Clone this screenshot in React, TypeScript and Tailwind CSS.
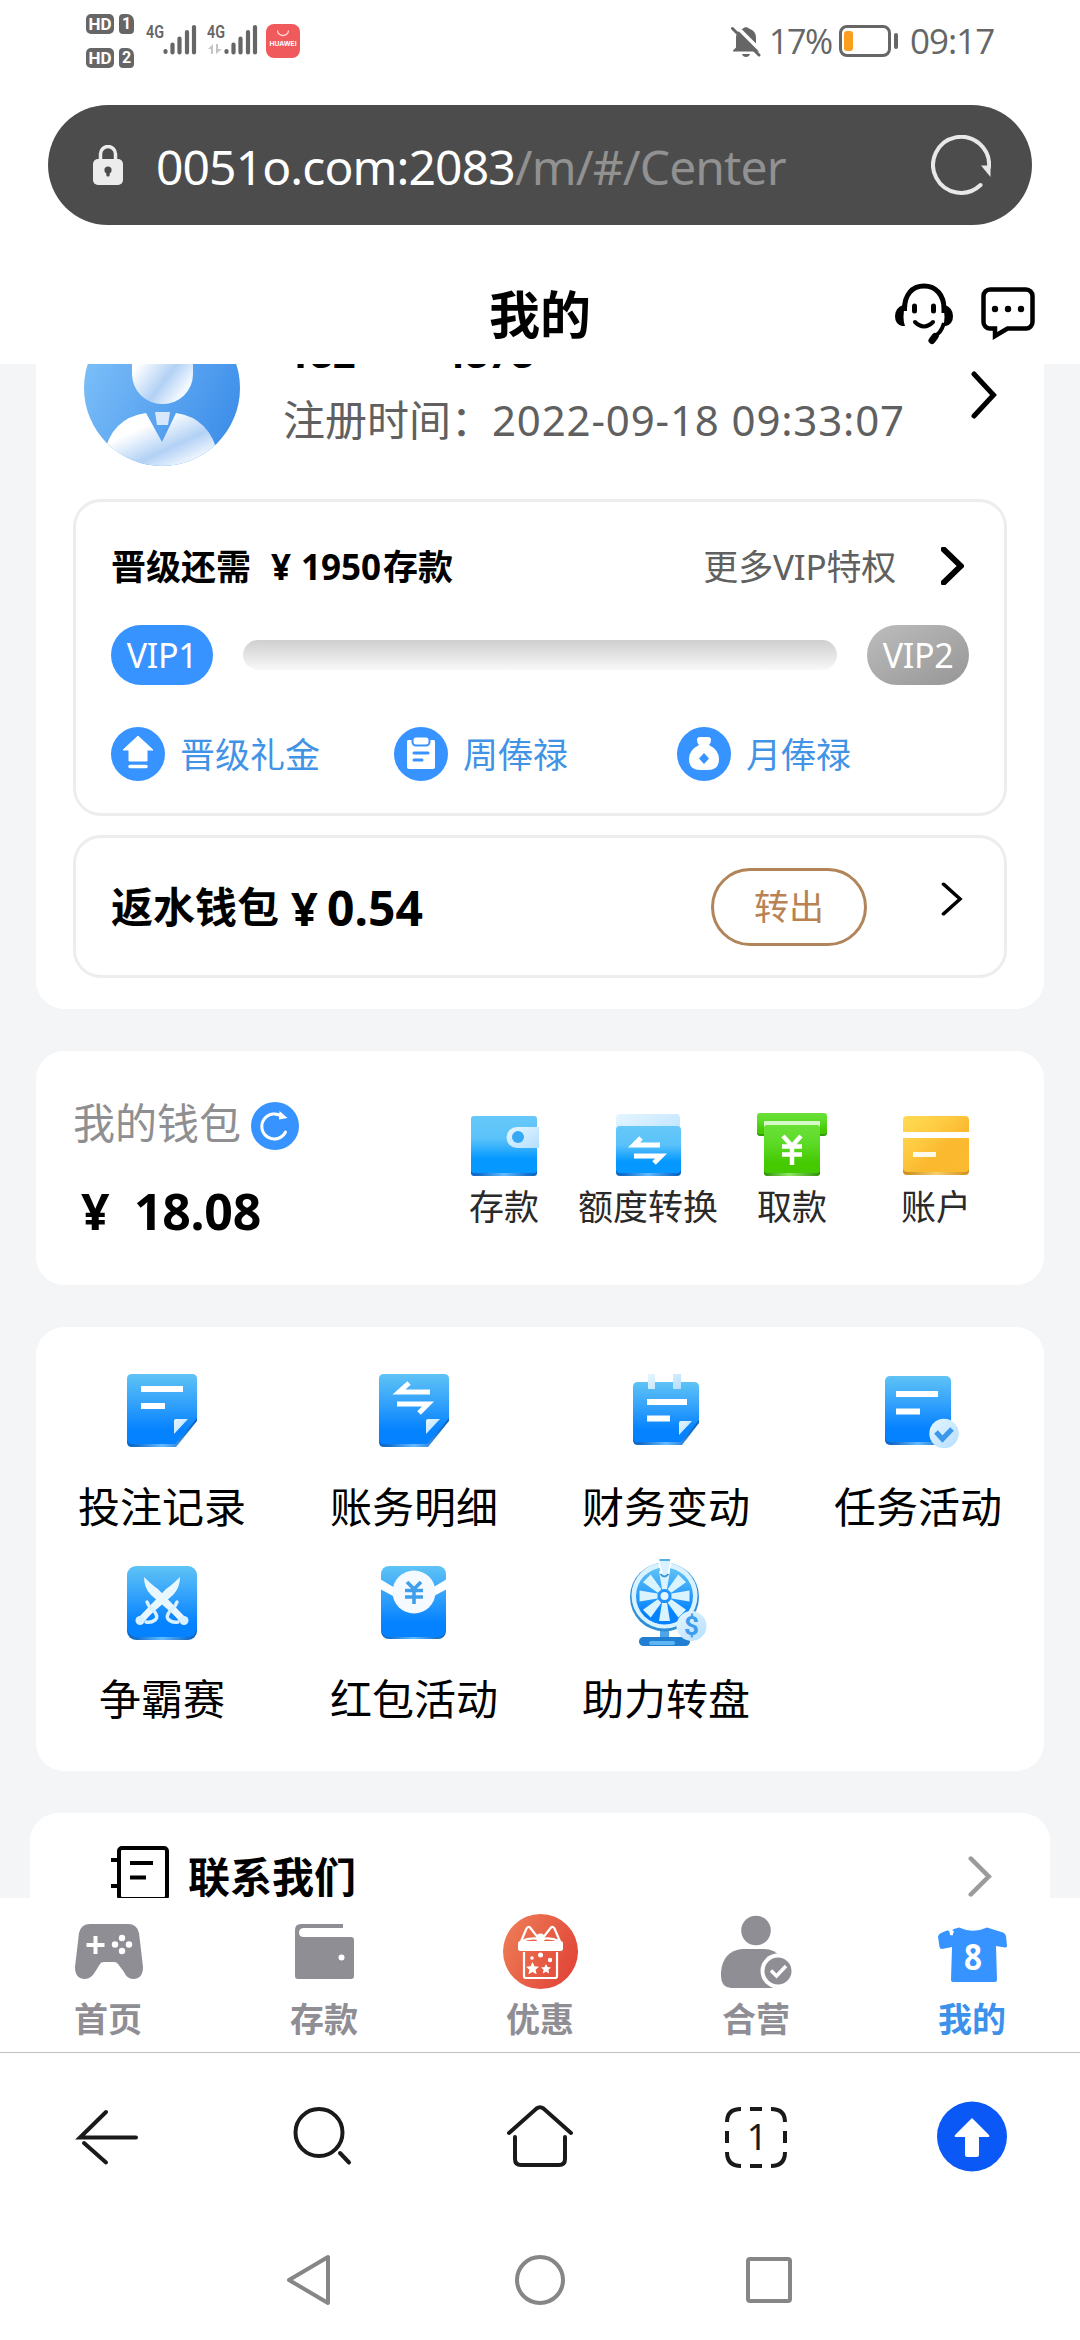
import React from "react";

type IconProps = { className?: string };

const FONT = "font-['Noto_Sans','Noto_Sans_CJK_SC',sans-serif]";

function Defs() {
  return (
    <svg className="absolute h-0 w-0" aria-hidden="true">
      <defs>
        <linearGradient id="blue" x1="0" y1="0" x2="0" y2="1">
          <stop offset="0" stopColor="#5fc3f5" />
          <stop offset="0.45" stopColor="#2f9ffc" />
          <stop offset="0.8" stopColor="#0582ff" />
          <stop offset="1" stopColor="#0582ff" />
        </linearGradient>
        <linearGradient id="sky" x1="0" y1="0" x2="0" y2="1">
          <stop offset="0" stopColor="#67c8f9" />
          <stop offset="0.4" stopColor="#5ac2fa" />
          <stop offset="0.75" stopColor="#0599ff" />
          <stop offset="1" stopColor="#0599ff" />
        </linearGradient>
        <linearGradient id="green" x1="0" y1="0" x2="0" y2="1">
          <stop offset="0" stopColor="#6ae038" />
          <stop offset="0.35" stopColor="#5edb28" />
          <stop offset="0.8" stopColor="#45c901" />
          <stop offset="1" stopColor="#45c901" />
        </linearGradient>
        <linearGradient id="gold" x1="0" y1="0" x2="1" y2="1">
          <stop offset="0" stopColor="#ffdb52" />
          <stop offset="0.35" stopColor="#fecb42" />
          <stop offset="0.6" stopColor="#fbb930" />
          <stop offset="1" stopColor="#fcba30" />
        </linearGradient>
        <linearGradient id="ice" x1="0" y1="0" x2="1" y2="1">
          <stop offset="0" stopColor="#e6f6ff" />
          <stop offset="1" stopColor="#b4dfff" />
        </linearGradient>
        <linearGradient id="edge" x1="0" y1="0" x2="1" y2="0">
          <stop offset="0" stopColor="#0a62c0" />
          <stop offset="0.15" stopColor="#1873cf" />
          <stop offset="0.5" stopColor="#65bbff" />
          <stop offset="0.85" stopColor="#1873cf" />
          <stop offset="1" stopColor="#0a62c0" />
        </linearGradient>
        <linearGradient id="edgeGreen" x1="0" y1="0" x2="1" y2="0">
          <stop offset="0" stopColor="#2f9005" />
          <stop offset="0.45" stopColor="#8ee765" />
          <stop offset="1" stopColor="#2f9005" />
        </linearGradient>
        <linearGradient id="edgeGold" x1="0" y1="0" x2="1" y2="0">
          <stop offset="0" stopColor="#c58a14" />
          <stop offset="0.5" stopColor="#f5cf6c" />
          <stop offset="1" stopColor="#cf9018" />
        </linearGradient>
        <linearGradient id="avatarBg" x1="0" y1="0.2" x2="1" y2="0.7">
          <stop offset="0" stopColor="#7fc1f9" />
          <stop offset="1" stopColor="#3d8eea" />
        </linearGradient>
        <linearGradient id="avatarSkin" x1="0" y1="0" x2="1" y2="1">
          <stop offset="0.3" stopColor="#ffffff" />
          <stop offset="0.62" stopColor="#b2d1f5" />
          <stop offset="0.85" stopColor="#f4f9ff" />
        </linearGradient>
        <linearGradient id="gift" x1="0" y1="0" x2="1" y2="0.5">
          <stop offset="0" stopColor="#ee8058" />
          <stop offset="1" stopColor="#e3493a" />
        </linearGradient>
      </defs>
    </svg>
  );
}

/* ---------- status bar ---------- */

function HdBadge({ sim }: { sim: string }) {
  return (
    <div className="flex h-[20px] gap-[5px]">
      <span className="h-[20px] w-[28px] rounded-[5px] bg-[#666] text-center text-[17px] leading-[20px] font-bold text-white font-['Roboto',sans-serif]">
        HD
      </span>
      <span className="h-[20px] w-[15px] rounded-[4px] rounded-tr-[7px] bg-[#666] text-center text-[16px] leading-[20px] font-bold text-white font-['Roboto',sans-serif]">
        {sim}
      </span>
    </div>
  );
}

function Signal({ data }: { data?: boolean }) {
  return (
    <svg className="h-[34px] w-[52px] shrink-0 overflow-visible" viewBox="0 0 52 34">
      <text x="0" y="15" fontSize="18" fontWeight="600" fill="#666" fontFamily="Roboto, sans-serif" textLength="18" lengthAdjust="spacingAndGlyphs">
        4G
      </text>
      {data && (
        <g fill="#c4c4c4">
          <path d="M1 26 L6 21 V31 H4 V26Z" />
          <path d="M9 21 V31 L15 26 H11 V21Z" />
        </g>
      )}
      <g stroke="#666" strokeWidth="4.2" strokeLinecap="round">
        <path d="M19.5 28v1M26.5 21.5v8M33.5 15.5v14M41 9v20.500M48 4v25.500" />
      </g>
    </svg>
  );
}

function StatusBar() {
  return (
    <div className="flex h-[105px] shrink-0 items-start pl-[86px]">
      <div className="mt-[14px] flex flex-col gap-[14px]">
        <HdBadge sim="1" />
        <HdBadge sim="2" />
      </div>
      <div className="mt-[23px] ml-[12px] flex gap-[9px]">
        <Signal />
        <Signal data />
      </div>
      <svg className="mt-[24px] ml-[7px] h-[34px] w-[34px]" viewBox="0 0 34 34">
        <rect width="34" height="34" rx="8" fill="#f05a5c" />
        <path d="M11.500 6.500a5.500 5 0 0 0 11 0" fill="none" stroke="#ffd8d4" strokeWidth="1.300" />
        <text x="3.500" y="22" fontSize="6.500" fontWeight="700" fill="#fff" fontFamily="Inter, sans-serif" textLength="27" lengthAdjust="spacingAndGlyphs">
          HUAWEI
        </text>
      </svg>
      <div className="mr-[86px] ml-auto flex h-[82px] items-center text-[#666]">
        <svg className="h-[32px] w-[30px]" viewBox="0 0 30 32">
          <path d="M5 14a10 10 0 0 1 7-10.500a4 3.500 0 0 1 6 0a10 10 0 0 1 7 9.500v9l3 3.500v1H2v-1l3-3z" fill="#666" />
          <path d="M11 29h8q-1 3-4 3t-4-3z" fill="#666" />
          <path d="M4 0L32 28" stroke="#fff" strokeWidth="3.500" />
          <path d="M1.500 3.500L28 30" stroke="#666" strokeWidth="3" strokeLinecap="round" />
        </svg>
        <span className="ml-[8px] w-[64px] text-[34px] leading-[48px] tracking-[-1.500px] whitespace-nowrap font-['Open_Sans',sans-serif]">17%</span>
        <svg className="ml-[6px] h-[32px] w-[60px]" viewBox="0 0 60 32">
          <rect x="1.500" y="1.500" width="49" height="29" rx="6.500" fill="none" stroke="#666" strokeWidth="3" />
          <rect x="5" y="6" width="9" height="20" rx="3" fill="#fa9e1e" />
          <rect x="55" y="8" width="4" height="16" rx="2" fill="#666" />
        </svg>
        <span className="ml-[11px] w-[84px] text-[35px] leading-[48px] tracking-[-1px] whitespace-nowrap font-['Open_Sans',sans-serif]">09:17</span>
      </div>
    </div>
  );
}

/* ---------- browser address bar ---------- */

function AddressBar() {
  return (
    <div className="mx-[48px] flex h-[120px] shrink-0 items-center rounded-full bg-[#4c4c4c] pr-[41px] pl-[45px]">
      <svg className="h-[40px] w-[30px]" viewBox="0 0 30 40">
        <path d="M7.500 15V9a7.500 7.500 0 0 1 15 0v6" fill="none" stroke="#ececec" strokeWidth="3.500" />
        <rect y="14" width="30" height="26" rx="5" fill="#ececec" />
        <circle cx="15" cy="25" r="3.600" fill="#4c4c4c" />
        <rect x="13.300" y="26" width="3.400" height="5.500" rx="1.500" fill="#4c4c4c" />
      </svg>
      <p className="mt-[4px] ml-[33px] text-[48px] leading-[66px] whitespace-nowrap text-white">
        <span className="tracking-[-0.9px]">0051o.com:2083</span>
        <span className="tracking-[-0.9px] text-[#919191]">/m/#/Center</span>
      </p>
      <svg className="ml-auto h-[60px] w-[60px]" viewBox="0 0 60 60">
        <path d="M49.500 50A28 28 0 1 1 58 32" fill="none" stroke="#e8e8e8" strokeWidth="4" strokeLinecap="round" />
        <path d="M50 30.500h9.500V42z" fill="#e8e8e8" />
      </svg>
    </div>
  );
}

function HeadsetIcon() {
  return (
    <svg className="h-[62px] w-[60px]" viewBox="0 0 60 62">
      <path d="M10.500 28v-2C10.500 12 18 3 30 3s20 9 20 23v4" fill="none" stroke="#000" strokeWidth="5" />
      <path d="M9 22q-8 3-8 11t7 10h3q-3-8 0-21zM51 22q8 3 8 11t-7 10h-3q3-8 0-21z" fill="#000" />
      <path d="M50 40q-3 11-11 14" fill="none" stroke="#000" strokeWidth="4" />
      <path d="M38 57.500l3-4" stroke="#000" strokeWidth="7" strokeLinecap="round" />
      <path d="M20.500 23v5M39.500 23v5" stroke="#000" strokeWidth="5" strokeLinecap="round" />
      <path d="M21 39q9 9 18 0" fill="none" stroke="#000" strokeWidth="4" strokeLinecap="round" />
    </svg>
  );
}

function ChatIcon() {
  return (
    <svg className="h-[54px] w-[54px]" viewBox="0 0 54 54">
      <path d="M9 2.500h36a6.500 6.500 0 0 1 6.500 6.500v26a6.500 6.500 0 0 1-6.500 6.500H26.500L14 49v-7.500H9A6.500 6.500 0 0 1 2.500 35V9A6.500 6.500 0 0 1 9 2.500z" fill="none" stroke="#000" strokeWidth="4.500" strokeLinejoin="miter" />
      <circle cx="14" cy="22" r="3.200" />
      <circle cx="27" cy="22" r="3.200" />
      <circle cx="40" cy="22" r="3.200" />
    </svg>
  );
}

function PageHeader() {
  return (
    <header className="grid h-[139px] shrink-0 grid-cols-3 items-center pt-[39px]">
      <span />
      <h1 className="text-center text-[51px] leading-[76px] font-bold text-black">我的</h1>
      <div className="flex items-center justify-end gap-[27px] pr-[45px]">
        <HeadsetIcon />
        <ChatIcon />
      </div>
    </header>
  );
}

/* ---------- profile card ---------- */

function Chevron({ className }: IconProps) {
  return (
    <svg className={className} viewBox="0 0 26 48" fill="none" stroke="currentColor" strokeLinecap="round" strokeLinejoin="miter" preserveAspectRatio="none">
      <path d="M3 3L22.500 24L3 45" />
    </svg>
  );
}

function Avatar() {
  return (
    <svg className="-mt-[54px] h-[156px] w-[156px] shrink-0" viewBox="0 0 156 156">
      <clipPath id="avatarClip">
        <circle cx="78" cy="78" r="78" />
      </clipPath>
      <g clipPath="url(#avatarClip)">
        <rect width="156" height="156" fill="url(#avatarBg)" />
        <rect x="48" y="14" width="61" height="80" rx="30" fill="url(#avatarSkin)" />
        <path d="M20 156V145Q27 108 62 103L78 132L92 103Q126 108 134 145V156z" fill="url(#avatarSkin)" />
        <path d="M71 102h15l-2 13H73z" fill="#d7e8fc" />
      </g>
    </svg>
  );
}

function Profile() {
  return (
    <div className="flex h-[135px] items-start pr-[47px] pl-[48px]">
      <Avatar />
      <div className="-mt-[41px] ml-[43px] flex flex-col gap-[7px] whitespace-nowrap">
        <p className="h-[60px] pl-[4px] text-[40px] leading-[60px] font-bold text-black">182****4878</p>
        <p className="flex h-[60px] text-[42px] leading-[60px] text-[#606060]">
          <span className="w-[209px]">注册时间：</span>
          <span className="tracking-[0.85px]">2022-09-18 09:33:07</span>
        </p>
      </div>
      <Chevron className="mt-[7px] ml-auto h-[48px] w-[26px] stroke-[5]" />
    </div>
  );
}

function GiftMoneyIcon() {
  return (
    <svg className="h-[54px] w-[54px]" viewBox="0 0 54 54">
      <circle cx="27" cy="27" r="27" fill="#3693ff" />
      <path d="M27 9L42 23H36V34H18V23H12z" fill="#fff" strokeLinejoin="round" stroke="#fff" strokeWidth="1" />
      <path d="M19 39.500h16" stroke="#fff" strokeWidth="3.500" strokeLinecap="round" />
    </svg>
  );
}

function WeeklyIcon() {
  return (
    <svg className="h-[54px] w-[54px]" viewBox="0 0 54 54">
      <circle cx="27" cy="27" r="27" fill="#3693ff" />
      <path d="M14 13h26q1 0 1 2v25q0 2-2 2H15q-2 0-2-2V15q0-2 1-2z" fill="#fff" />
      <rect x="18.500" y="9.500" width="17" height="9" rx="3.500" fill="#fff" stroke="#3693ff" strokeWidth="2" />
      <path d="M20 26h14M20 33h8" stroke="#3693ff" strokeWidth="3" strokeLinecap="round" />
    </svg>
  );
}

function MonthlyIcon() {
  return (
    <svg className="h-[54px] w-[54px]" viewBox="0 0 54 54">
      <circle cx="27" cy="27" r="27" fill="#3693ff" />
      <path d="M20 13q0-3 3-3h8q3 0 3 3q0 3-2 5q10 5 10 14q0 11-11 11h-8q-11 0-11-11q0-9 10-14q-2-2-2-5z" fill="#fff" />
      <path d="M27 26l5 5.500l-5 5.500l-5-5.500z" fill="#3693ff" />
    </svg>
  );
}

const perks = [
  { label: "晋级礼金", Icon: GiftMoneyIcon },
  { label: "周俸禄", Icon: WeeklyIcon },
  { label: "月俸禄", Icon: MonthlyIcon },
];

function VipPanel() {
  return (
    <section className="mx-[37px] h-[317px] rounded-[28px] border-[3px] border-[#ededed] px-[35px]">
      <div className="mt-[35px] flex h-[60px] items-center text-[35px] leading-[60px] whitespace-nowrap">
        <p className="flex font-bold text-black">
          <span className="w-[160px]">晋级还需</span>
          <span className="w-[30px]">¥</span>
          <span className="w-[82px]">1950</span>
          <span>存款</span>
        </p>
        <span className="ml-auto tracking-[-0.2px] text-[#606060]">更多VIP特权</span>
        <Chevron className="mr-[5px] mb-[3px] ml-[45px] h-[38px] w-[23px] stroke-[7]" />
      </div>
      <div className="mt-[28px] flex h-[60px] items-center text-[34px] text-white">
        <span className="flex h-[60px] w-[102px] items-center justify-center rounded-full bg-[#3693ff] tracking-[-0.3px]">VIP1</span>
        <div className="mx-[30px] h-[30px] flex-1 rounded-full bg-linear-to-b from-[#cfcfcf] to-[#f8f8f8]" />
        <span className="flex h-[60px] w-[102px] items-center justify-center rounded-full bg-linear-to-br from-[#bdbdbd] to-[#969696] tracking-[-0.3px]">VIP2</span>
      </div>
      <div className="mt-[41px] flex text-[35px] leading-[54px] text-[#4193e6]">
        {perks.map(({ label, Icon }) => (
          <div key={label} className="flex w-[283px] shrink-0 items-center gap-[15px]">
            <Icon />
            <span className="mt-[2px]">{label}</span>
          </div>
        ))}
      </div>
    </section>
  );
}

function RebatePanel() {
  return (
    <section className="mx-[37px] mt-[19px] flex h-[143px] items-center rounded-[28px] border-[3px] border-[#ededed] pr-[41px] pl-[35px]">
      <p className="flex items-center leading-[60px] font-bold whitespace-nowrap text-black">
        <span className="w-[180px] text-[42px]">返水钱包</span>
        <span className="w-[36px] pt-[2px] text-[47px]">¥</span>
        <span className="pt-[2px] text-[48px]">0.54</span>
      </p>
      <button className="ml-auto h-[78px] w-[156px] rounded-full border-[3px] border-[#b1845a] text-[35px] leading-[72px] text-[#b88252]">转出</button>
      <Chevron className="mb-[16px] ml-[74px] h-[34px] w-[22px] stroke-[4.5]" />
    </section>
  );
}

/* ---------- wallet card ---------- */

function DepositIcon() {
  return (
    <svg className="h-[70px] w-[80px]" viewBox="0 0 80 70">
      <rect x="7" y="10" width="66" height="56" rx="3" fill="url(#edge)" />
      <rect x="7" y="6" width="66" height="57" rx="3" fill="url(#sky)" />
      <path d="M75 17H53a10.500 10.500 0 0 0 0 21H75z" fill="url(#ice)" />
      <circle cx="54" cy="27" r="6" fill="#35a8f6" />
    </svg>
  );
}

function TransferIcon() {
  return (
    <svg className="h-[70px] w-[80px]" viewBox="0 0 80 70">
      <rect x="8" y="4" width="64" height="30" rx="4" fill="url(#ice)" />
      <rect x="8" y="20" width="65" height="46" rx="4" fill="url(#edge)" />
      <rect x="8" y="16" width="65" height="47" rx="4" fill="url(#sky)" />
      <path d="M52 35H26L33 28M26 46H53L46 53" fill="none" stroke="#fff" strokeWidth="5" />
    </svg>
  );
}

function WithdrawIcon() {
  return (
    <svg className="h-[70px] w-[80px]" viewBox="0 0 80 70">
      <rect x="5" y="6" width="70" height="20" rx="3" fill="#329b07" />
      <rect x="5" y="3" width="70" height="21" rx="3" fill="url(#green)" />
      <rect x="12" y="11" width="56" height="6" fill="#d7f8c9" />
      <rect x="12" y="20" width="56" height="46" rx="3" fill="url(#edgeGreen)" />
      <rect x="12" y="15" width="56" height="48" rx="3" fill="url(#green)" />
      <path d="M31 26l9 10l9-10M40 36v19M30 36.500h20M30 44.500h20" fill="none" stroke="#fff" strokeWidth="4.500" />
    </svg>
  );
}

function AccountIcon() {
  return (
    <svg className="h-[70px] w-[80px]" viewBox="0 0 80 70">
      <rect x="7" y="12" width="66" height="53" rx="4" fill="url(#edgeGold)" />
      <rect x="7" y="6" width="66" height="56" rx="4" fill="url(#gold)" />
      <rect x="7" y="22" width="66" height="6" fill="#fff" />
      <rect x="17" y="42" width="23" height="5" fill="#fffbea" />
    </svg>
  );
}

const walletActions = [
  { label: "存款", Icon: DepositIcon },
  { label: "额度转换", Icon: TransferIcon },
  { label: "取款", Icon: WithdrawIcon },
  { label: "账户", Icon: AccountIcon },
];

function WalletCard() {
  return (
    <section className="mx-[36px] mt-[42px] flex h-[234px] shrink-0 rounded-[28px] bg-white px-[36px]">
      <div className="flex-1 pt-[42px]">
        <div className="flex h-[60px] items-center">
          <span className="w-[179px] pl-[1px] text-[42px] leading-[60px] text-[#8f8f92]">我的钱包</span>
          <svg className="mt-[6px] h-[48px] w-[48px]" viewBox="0 0 48 48">
            <circle cx="24" cy="24" r="24" fill="#3693ff" />
            <path d="M34.500 30a12.500 12.500 0 1 1-3-15" fill="none" stroke="#fff" strokeWidth="3" strokeLinecap="round" />
            <path d="M28.500 9l8 7l-8.500 1.500z" fill="#fff" />
          </svg>
        </div>
        <p className="mt-[28px] flex h-[60px] pl-[9px] text-[50px] leading-[60px] font-bold whitespace-nowrap text-black">
          <span className="w-[53px]">¥</span>
          <span className="tracking-[-0.3px]">18.08</span>
        </p>
      </div>
      <div className="grid w-[576px] shrink-0 grid-cols-4 pt-[59px]">
        {walletActions.map(({ label, Icon }) => (
          <div key={label} className="flex flex-col items-center">
            <Icon />
            <span className="mt-[5px] text-[35px] leading-[44px] whitespace-nowrap text-[#2a2a2a]">{label}</span>
          </div>
        ))}
      </div>
    </section>
  );
}

/* ---------- feature grid ---------- */

function FoldedSheet() {
  return (
    <>
      <path d="M10 40H80V56L59 82H15q-5 0-5-5z" fill="url(#edge)" />
      <path d="M15 9H75q5 0 5 5V53L58 79H15q-5 0-5-5V14q0-5 5-5z" fill="url(#blue)" />
      <path d="M57 69V56q0-2 2-2H71z" fill="url(#ice)" />
    </>
  );
}

function BetRecordIcon() {
  return (
    <svg className="h-[90px] w-[90px]" viewBox="0 0 90 90">
      <FoldedSheet />
      <path d="M24 24H66M24 41H48" stroke="#fff" strokeWidth="6" />
    </svg>
  );
}

function LedgerIcon() {
  return (
    <svg className="h-[90px] w-[90px]" viewBox="0 0 90 90">
      <FoldedSheet />
      <path d="M61 27H30L40 18M28 39H59L50 48" fill="none" stroke="#fff" strokeWidth="5" />
    </svg>
  );
}

function FinanceIcon() {
  return (
    <svg className="h-[90px] w-[90px]" viewBox="0 0 90 90">
      <path d="M12 40H78V58L61 80H17q-5 0-5-5z" fill="url(#edge)" />
      <path d="M17 17H73q5 0 5 5V55L60 77H17q-5 0-5-5V22q0-5 5-5z" fill="url(#blue)" />
      <path d="M27 9h7v15h-7zM52 9h8v15h-8z" fill="url(#ice)" />
      <path d="M26 37H66M26 53.500H49" stroke="#fff" strokeWidth="6" />
      <path d="M58 70V58q0-2 2-2H71z" fill="url(#ice)" />
    </svg>
  );
}

function TaskIcon() {
  return (
    <svg className="h-[90px] w-[90px]" viewBox="0 0 90 90">
      <rect x="12" y="20" width="66" height="60" rx="5" fill="url(#edge)" />
      <rect x="12" y="11" width="66" height="66" rx="5" fill="url(#blue)" />
      <path d="M23 29H65M23 46.500H47" stroke="#fff" strokeWidth="6" />
      <circle cx="71" cy="68.500" r="14.700" fill="url(#ice)" />
      <path d="M63 67l6.500 7L79 64" fill="none" stroke="#3a97ea" strokeWidth="5" />
    </svg>
  );
}

function Saber() {
  return (
    <g>
      <path d="M27 20Q27 31 34 38L64 64L68 60L41 32Q35 28 27 20z" fill="#e9f7ff" />
      <path d="M56 54L64 63" stroke="#e9f7ff" strokeWidth="4" />
      <path d="M60 45l-2 4l-5 5q-5 6-1 9q4 3 9 2" fill="none" stroke="#d8f0ff" strokeWidth="3.500" strokeLinecap="round" />
      <circle cx="67" cy="63.500" r="4.500" fill="#d8f0ff" />
    </g>
  );
}

function TournamentIcon() {
  return (
    <svg className="h-[90px] w-[90px]" viewBox="0 0 90 90">
      <rect x="10" y="30" width="70" height="53" rx="9" fill="url(#edge)" />
      <rect x="10" y="9" width="70" height="71" rx="9" fill="url(#blue)" />
      <Saber />
      <g transform="translate(90 0) scale(-1 1)">
        <Saber />
      </g>
    </svg>
  );
}

function RedPacketIcon() {
  return (
    <svg className="h-[90px] w-[90px]" viewBox="0 0 90 90">
      <rect x="12" y="30" width="65" height="52" rx="8" fill="url(#edge)" />
      <rect x="12" y="9" width="65" height="71" rx="8" fill="url(#blue)" />
      <path d="M11 22L26 31V40L11 32zM78 22L63 31V40L78 32z" fill="#fff" />
      <circle cx="45" cy="35" r="21.500" fill="#f4faff" />
      <path d="M38 25l7 7l7-7M45 32v15M36 33.500h18M36 40h18" fill="none" stroke="#3f9fea" strokeWidth="3.600" />
    </svg>
  );
}

const spokes = [0, 45, 90, 135, 180, 225, 270, 315];

function WheelIcon() {
  return (
    <svg className="h-[90px] w-[90px]" viewBox="0 0 90 90">
      <rect x="39" y="68" width="9" height="14" fill="#4ea6e8" />
      <rect x="18" y="80" width="51" height="9" rx="4.500" fill="#207fd0" />
      <rect x="28" y="84" width="26" height="4" rx="2" fill="#5fb6f5" />
      <circle cx="43.500" cy="40" r="34.500" fill="#2e8fd6" />
      <circle cx="43.500" cy="38.500" r="33" fill="#d9f2ff" />
      <circle cx="43.500" cy="39" r="28.500" fill="url(#blue)" />
      {spokes.map((angle) => (
        <path key={angle} d="M38 14h11l-3 18h-5z" fill="#d9f4ff" transform={`rotate(${angle} 43.500 39)`} />
      ))}
      <circle cx="43.500" cy="39" r="5" fill="#e4f6ff" stroke="#2491fa" strokeWidth="2" />
      <path d="M37.500 3h13l-3.500 15q-3 4-6 0z" fill="#d9f2ff" stroke="#fff" strokeWidth="1.500" />
      <path d="M38.500 3h10.500" stroke="#55aeea" strokeWidth="2" />
      <path d="M39.500 17q4 5 8 0" fill="none" stroke="#3a97da" strokeWidth="2" />
      <circle cx="70.500" cy="69" r="15" fill="url(#ice)" />
      <text x="70.500" y="78" fontSize="26" fontWeight="700" fill="#3d9cec" textAnchor="middle" fontFamily="Roboto, sans-serif">
        $
      </text>
    </svg>
  );
}

const features = [
  { label: "投注记录", Icon: BetRecordIcon },
  { label: "账务明细", Icon: LedgerIcon },
  { label: "财务变动", Icon: FinanceIcon },
  { label: "任务活动", Icon: TaskIcon },
  { label: "争霸赛", Icon: TournamentIcon },
  { label: "红包活动", Icon: RedPacketIcon },
  { label: "助力转盘", Icon: WheelIcon },
];

function FeatureGrid() {
  return (
    <section className="mx-[36px] mt-[42px] grid h-[444px] shrink-0 grid-cols-4 content-start rounded-[28px] bg-white pt-[38px]">
      {features.map(({ label, Icon }) => (
        <div key={label} className="flex h-[192px] flex-col items-center">
          <Icon />
          <span className="mt-[22px] text-[42px] leading-[60px] text-black">{label}</span>
        </div>
      ))}
    </section>
  );
}

function ContactRow() {
  return (
    <section className="mx-[30px] mt-[42px] flex h-[85px] shrink-0 items-start rounded-t-[28px] bg-white pr-[58px] pl-[81px]">
      <svg className="mt-[33px] h-[54px] w-[58px]" viewBox="0 0 58 54" fill="none" stroke="#000" strokeWidth="4">
        <rect x="8" y="2" width="48" height="51" rx="3" />
        <path d="M0 14h8M0 40h8" />
        <path d="M19 17h23M19 31.500h16" />
      </svg>
      <span className="mt-[34px] ml-[19px] text-[42px] leading-[60px] font-bold text-black">联系我们</span>
      <Chevron className="mt-[43px] ml-auto h-[41px] w-[24px] stroke-[5] text-[#9b9b9b]" />
    </section>
  );
}

/* ---------- app tab bar ---------- */

function GamepadIcon() {
  return (
    <svg className="h-[80px] w-[90px]" viewBox="0 0 90 80">
      <path d="M27 14H65Q74 14 76 23L80 57Q80 69 70 69Q64 69 61 62L55 54Q54 52 51 52H41Q38 52 37 54L32 62Q28 69 22 69Q12 69 12 57L16 23Q18 14 27 14z" fill="#8f8e94" />
      <path d="M32.500 26v18M23.500 35h18" stroke="#fff" strokeWidth="4" />
      <g fill="#fff">
        <circle cx="59" cy="28" r="3.200" />
        <circle cx="59" cy="41" r="3.200" />
        <circle cx="52" cy="34.500" r="3.200" />
        <circle cx="66" cy="34.500" r="3.200" />
      </g>
    </svg>
  );
}

function WalletTabIcon() {
  return (
    <svg className="h-[80px] w-[90px]" viewBox="0 0 90 80">
      <path d="M22 14H64V18H25Q20 18 20 22.500T25 27H72Q75 27 75 30V66Q75 69 72 69H19Q16 69 16 66V20Q16 14 22 14z" fill="#8f8e94" />
      <circle cx="62.500" cy="47.500" r="3" fill="#fff" />
    </svg>
  );
}

function PromoTabIcon() {
  return (
    <svg className="h-[80px] w-[90px]" viewBox="0 0 90 80">
      <circle cx="45.500" cy="41.500" r="37.500" fill="url(#gift)" />
      <g fill="none" stroke="#fff" strokeWidth="2.200" strokeLinejoin="round">
        <path d="M44 29L35 17.500Q33 16 31.500 18.500L26 31.500Q35 27 44 29zM47 29L56 17.500Q58 16 59.500 18.500L65 31.500Q56 27 47 29z" />
        <path d="M29 42V66Q29 68 31 68H60Q62 68 62 66V42" />
      </g>
      <rect x="23" y="31" width="45" height="10" rx="2.500" fill="#fff" />
      <circle cx="45.500" cy="28" r="4.500" fill="#fff" />
      <g fill="#fff">
        <path d="M37.500 52l2 4.200l4.500.5l-3.400 3l1 4.600l-4.100-2.300l-4.100 2.300l1-4.600l-3.400-3l4.500-.5z" />
        <path d="M51 54l1.500 3l3.500.5l-2.600 2.300l.8 3.700l-3.200-1.800l-3.200 1.800l.8-3.700L46 57.500l3.500-.5z" />
        <circle cx="45.500" cy="45" r="2.500" />
        <circle cx="37" cy="48" r="1.800" />
        <circle cx="55" cy="50" r="2.200" />
      </g>
    </svg>
  );
}

function PartnerIcon() {
  return (
    <svg className="h-[80px] w-[90px]" viewBox="0 0 90 80">
      <circle cx="45" cy="20.500" r="14.800" fill="#8f8e94" />
      <path d="M31 39H53Q64 39 70 48V78H20Q10 77 10 66V62Q12 41 31 39z" fill="#8f8e94" />
      <circle cx="67" cy="61" r="17.500" fill="#fff" />
      <circle cx="67" cy="61" r="13.500" fill="#8f8e94" />
      <path d="M60 60.500l5.500 5.500L75 56" fill="none" stroke="#fff" strokeWidth="3.500" />
    </svg>
  );
}

function JerseyIcon() {
  return (
    <svg className="h-[80px] w-[90px]" viewBox="0 0 90 80">
      <path d="M32 17.500Q46 24 60 17.500L76 22.500Q78.500 23.500 79 26L80 36Q80 37.500 78 37.500L69 36L70 70Q70 72 68 72H26Q24 72 24 70L25 37L15 39Q13 39 12.500 37L11 26.500Q11.500 24 14 23L20 20.500Q22 20 22.500 22L23 25L25.500 25.500L27 21L25 20.500L27 19z" fill="#3693ff" />
      <text x="46" y="60" fontSize="35" fontWeight="700" fill="#fff" textAnchor="middle" fontFamily="Noto Sans, sans-serif" textLength="18" lengthAdjust="spacingAndGlyphs">
        8
      </text>
    </svg>
  );
}

const tabs = [
  { label: "首页", Icon: GamepadIcon, active: false },
  { label: "存款", Icon: WalletTabIcon, active: false },
  { label: "优惠", Icon: PromoTabIcon, active: false },
  { label: "合营", Icon: PartnerIcon, active: false },
  { label: "我的", Icon: JerseyIcon, active: true },
];

function TabBar() {
  return (
    <nav className="grid h-[155px] shrink-0 grid-cols-5 border-b border-[#c0c0c2] pt-[12px]">
      {tabs.map(({ label, Icon, active }) => (
        <div key={label} className="flex flex-col items-center">
          <Icon />
          <span className={active ? "mt-[9px] text-[34px] leading-[40px] font-bold text-[#3c91ec]" : "mt-[9px] text-[34px] leading-[40px] font-bold text-[#8f8e94]"}>
            {label}
          </span>
        </div>
      ))}
    </nav>
  );
}

/* ---------- browser toolbar and system navigation ---------- */

function BrowserToolbar() {
  const icon = "h-[72px] w-[72px]";
  return (
    <div className="grid h-[167px] shrink-0 grid-cols-5 items-center justify-items-center">
      <svg className={icon} viewBox="0 0 72 72" fill="none" stroke="#1a1a1a" strokeWidth="4" strokeLinecap="round">
        <path d="M34 11L8 36.500H64M12 42L34 61.500" />
      </svg>
      <svg className={icon} viewBox="0 0 72 72" fill="none" stroke="#1a1a1a" strokeWidth="4" strokeLinecap="round">
        <circle cx="31" cy="31.500" r="23.500" />
        <path d="M52 52L61 61.500" />
      </svg>
      <svg className={icon} viewBox="0 0 72 72" fill="none" stroke="#1a1a1a" strokeWidth="4" strokeLinecap="round">
        <path d="M5 32L32.500 7.500Q36 5 39.500 7.500L67 32" />
        <path d="M11 36V58Q11 64 17 64H55Q61 64 61 58V36" />
      </svg>
      <svg className={icon} viewBox="0 0 72 72" fill="none" stroke="#1a1a1a" strokeWidth="4">
        <path d="M7 21Q7 8 21 8M51 8Q65 8 65 21M65 51Q65 65 51 65M21 65Q7 65 7 51M30 8H42M30 65H42M7 30V42M65 30V42" />
        <text x="37" y="49" fontSize="36" fill="#1a1a1a" stroke="none" textAnchor="middle" fontFamily="Noto Sans, sans-serif">
          1
        </text>
      </svg>
      <svg className={icon} viewBox="0 0 72 72">
        <circle cx="36" cy="35.500" r="35" fill="#0a59f7" />
        <path d="M36 17L53 34Q54 36 52 36H43V54Q43 56 41 56H31Q29 56 29 54V36H20Q18 36 19 34z" fill="#fff" />
      </svg>
    </div>
  );
}

function SystemNav() {
  return (
    <div className="flex h-[120px] shrink-0 items-center pl-[286px]">
      <svg className="h-[52px] w-[46px]" viewBox="0 0 46 52" fill="none" stroke="#868686" strokeWidth="4" strokeLinejoin="round">
        <path d="M42 3V49L3 26z" />
      </svg>
      <svg className="ml-[182px] h-[52px] w-[52px]" viewBox="0 0 52 52" fill="none" stroke="#868686" strokeWidth="4">
        <circle cx="26" cy="26" r="23" />
      </svg>
      <svg className="ml-[180px] h-[46px] w-[46px]" viewBox="0 0 46 46" fill="none" stroke="#868686" strokeWidth="4">
        <rect x="2" y="2" width="42" height="42" rx="2" />
      </svg>
    </div>
  );
}

export default function App() {
  return (
    <div className={`relative flex h-[2340px] w-[1080px] flex-col overflow-hidden bg-white ${FONT}`}>
      <Defs />
      <StatusBar />
      <AddressBar />
      <PageHeader />
      <main className="flex h-[1534px] shrink-0 flex-col overflow-hidden bg-[#f4f5f7]">
        <section className="mx-[36px] h-[645px] shrink-0 rounded-b-[28px] bg-white">
          <Profile />
          <VipPanel />
          <RebatePanel />
        </section>
        <WalletCard />
        <FeatureGrid />
        <ContactRow />
      </main>
      <TabBar />
      <BrowserToolbar />
      <SystemNav />
    </div>
  );
}
